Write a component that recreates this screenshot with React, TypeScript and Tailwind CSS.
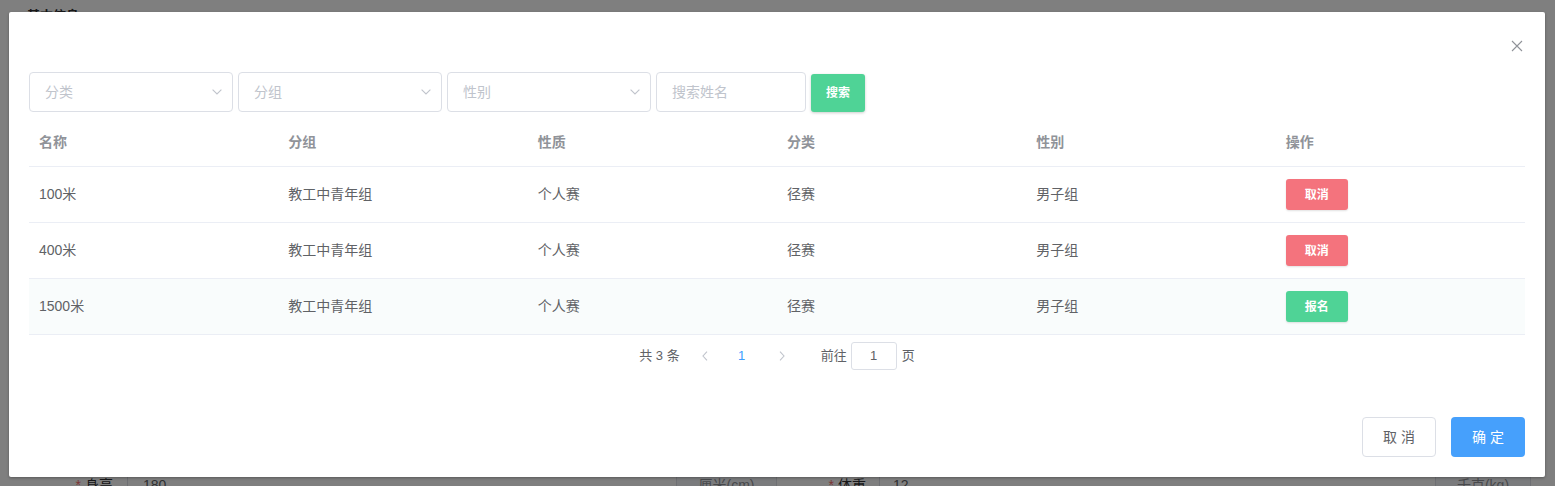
import React from "react";

const FONT = { fontFamily: '"Liberation Sans", "Noto Sans CJK SC", sans-serif' };

function Chevron({ className = "" }: { className?: string }) {
  return (
    <svg width="10" height="6" viewBox="0 0 10 6" className={className} fill="none">
      <path d="M0.6 0.6 L5 5 L9.4 0.6" stroke="#c0c4cc" strokeWidth="1.1" />
    </svg>
  );
}

function SelectBox({ label }: { label: string }) {
  return (
    <div className="w-[204px] h-[40px] border border-[#dcdfe6] rounded-[4px] flex items-center justify-between pl-[15px] pr-[10px] bg-white">
      <span className="text-[14px] text-[#c0c4cc]">{label}</span>
      <Chevron />
    </div>
  );
}

const rows = [
  { name: "100米", group: "教工中青年组", nature: "个人赛", cat: "径赛", sex: "男子组", action: "cancel" },
  { name: "400米", group: "教工中青年组", nature: "个人赛", cat: "径赛", sex: "男子组", action: "cancel" },
  { name: "1500米", group: "教工中青年组", nature: "个人赛", cat: "径赛", sex: "男子组", action: "join" },
];

export default function App() {
  return (
    <div className="relative h-[486px] w-full overflow-hidden bg-white" style={FONT}>
      {/* background page */}
      <div className="h-[486px] flex flex-col">
        <div className="pt-[9px] pl-[27px] text-[13px] leading-none font-bold text-[#303133]">基本信息</div>
        <div className="mt-auto mb-[-19px] h-[40px] flex items-stretch text-[14px]">
          <div className="w-[127px] pr-[14px] flex items-center justify-end text-[#303133]">
            <span className="text-[#f56c6c] mr-[4px]">*</span>身高
          </div>
          <div className="w-[550px] border border-[#dcdfe6] rounded-l-[4px] flex items-center pl-[15px] text-[#606266]">180</div>
          <div className="w-[100px] border border-l-0 border-[#dcdfe6] bg-[#f5f7fa] flex items-center justify-center text-[#909399]">厘米(cm)</div>
          <div className="w-[102px] pr-[13px] flex items-center justify-end text-[#303133]">
            <span className="text-[#f56c6c] mr-[4px]">*</span>体重
          </div>
          <div className="w-[557px] border border-[#dcdfe6] rounded-l-[4px] flex items-center pl-[13px] text-[#606266]">12</div>
          <div className="w-[95px] border border-l-0 border-[#dcdfe6] bg-[#f5f7fa] flex items-center justify-center text-[#909399]">千克(kg)</div>
        </div>
      </div>

      {/* overlay */}
      <div className="absolute inset-0 bg-black/50" />

      {/* dialog */}
      <div className="absolute left-[9px] top-[12px] w-[1536px] bg-white rounded-[2px] shadow-[0_1px_3px_rgba(0,0,0,0.3)] pt-[60px] px-[20px] pb-[20px]">
        <button className="absolute top-[28px] right-[22px] w-[12px] h-[12px] flex items-center justify-center">
          <svg width="12" height="12" viewBox="0 0 12 12" fill="none">
            <path d="M1 1 L11 11 M11 1 L1 11" stroke="#909399" strokeWidth="1.1" />
          </svg>
        </button>

        {/* filters */}
        <div className="flex items-start gap-[5px] h-[40px]">
          <SelectBox label="分类" />
          <SelectBox label="分组" />
          <SelectBox label="性别" />
          <div className="w-[150px] h-[40px] border border-[#dcdfe6] rounded-[4px] flex items-center pl-[15px]">
            <span className="text-[14px] text-[#c0c4cc]">搜索姓名</span>
          </div>
          <button className="mt-[2px] w-[54px] h-[38px] rounded-[3px] bg-[#4fd396] text-white text-[12px] font-bold shadow-[0_1px_3px_rgba(0,0,0,0.2)] flex items-center justify-center">
            搜索
          </button>
        </div>

        {/* table */}
        <div className="mt-[7px] text-[14px]">
          <div className="grid grid-cols-6 h-[48px] border-b border-[#ebeef5] items-center">
            {["名称", "分组", "性质", "分类", "性别", "操作"].map((h) => (
              <div key={h} className="pl-[10px] font-bold text-[#909399]">{h}</div>
            ))}
          </div>
          {rows.map((r, i) => (
            <div
              key={r.name}
              className={`grid grid-cols-6 h-[56px] border-b border-[#ebeef5] items-center text-[#606266] ${i === 2 ? "bg-[#f9fcfc]" : "bg-white"}`}
            >
              <div className="pl-[10px]">{r.name}</div>
              <div className="pl-[10px]">{r.group}</div>
              <div className="pl-[10px]">{r.nature}</div>
              <div className="pl-[10px]">{r.cat}</div>
              <div className="pl-[10px]">{r.sex}</div>
              <div className="pl-[10px]">
                {r.action === "cancel" ? (
                  <button className="w-[62px] h-[31px] rounded-[3px] bg-[#f4737d] text-white text-[12px] font-bold shadow-[0_1px_2px_rgba(0,0,0,0.12)] flex items-center justify-center">
                    取消
                  </button>
                ) : (
                  <button className="w-[62px] h-[31px] rounded-[3px] bg-[#4fd396] text-white text-[12px] font-bold shadow-[0_1px_2px_rgba(0,0,0,0.12)] flex items-center justify-center">
                    报名
                  </button>
                )}
              </div>
            </div>
          ))}
        </div>

        {/* pagination */}
        <div className="mt-[7px] h-[28px] flex items-center justify-center text-[13px] text-[#606266]">
          <span className="mr-[10px]">共 3 条</span>
          <div className="w-[30px] h-[28px] flex items-center justify-center">
            <svg width="6" height="10" viewBox="0 0 6 10" fill="none">
              <path d="M5 0.7 L1 5 L5 9.3" stroke="#c0c4cc" strokeWidth="1.1" />
            </svg>
          </div>
          <div className="w-[44px] h-[28px] flex items-center justify-center text-[#409eff]">1</div>
          <div className="w-[36px] h-[28px] flex items-center justify-center">
            <svg width="6" height="10" viewBox="0 0 6 10" fill="none">
              <path d="M1 0.7 L5 5 L1 9.3" stroke="#c0c4cc" strokeWidth="1.1" />
            </svg>
          </div>
          <span className="ml-[21px]">前往</span>
          <div className="ml-[4px] w-[46px] h-[28px] border border-[#dcdfe6] rounded-[3px] flex items-center justify-center">1</div>
          <span className="ml-[5px]">页</span>
        </div>

        {/* footer */}
        <div className="mt-[47px] flex justify-end gap-[15px]">
          <button className="w-[74px] h-[40px] rounded-[4px] border border-[#dcdfe6] bg-white text-[14px] text-[#606266] flex items-center justify-center">
            取 消
          </button>
          <button className="w-[74px] h-[40px] rounded-[4px] bg-[#46a0fc] text-[14px] text-white flex items-center justify-center">
            确 定
          </button>
        </div>
      </div>
    </div>
  );
}
